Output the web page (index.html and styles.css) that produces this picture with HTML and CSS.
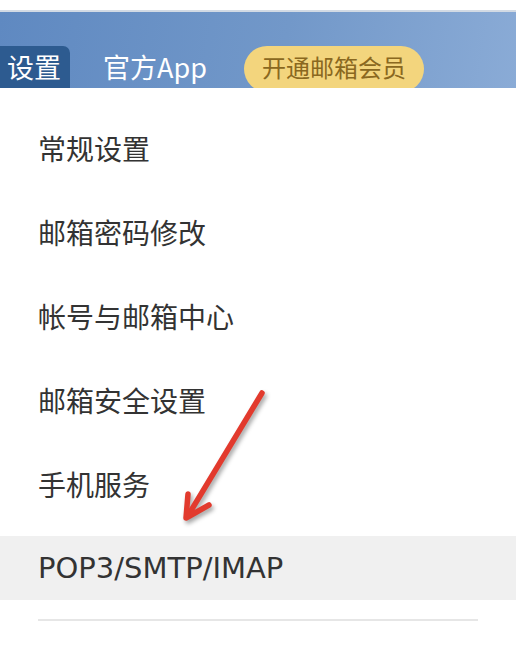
FILE: index.html
```html
<!DOCTYPE html>
<html lang="zh-CN">
<head>
<meta charset="utf-8">
<title>设置</title>
<link rel="stylesheet" href="styles.css">
</head>
<body>
<div class="page">
  <div class="topstrip"></div>
  <header class="header">
    <nav class="nav">
      <span class="tab active">设置</span>
      <span class="tab">官方App</span>
      <span class="vip">开通邮箱会员</span>
    </nav>
  </header>
  <ul class="menu">
    <li class="item">常规设置</li>
    <li class="item">邮箱密码修改</li>
    <li class="item">帐号与邮箱中心</li>
    <li class="item">邮箱安全设置</li>
    <li class="item">手机服务</li>
    <li class="item selected latin">POP3/SMTP/IMAP</li>
  </ul>
  <div class="divider"></div>
  <svg class="arrow" width="516" height="656" viewBox="0 0 516 656" aria-hidden="true">
    <g fill="none" stroke="#e23a2d" stroke-width="5.5" stroke-linecap="round" stroke-linejoin="round">
      <path d="M262 393 L189 514"/>
      <path d="M188 494 L186 518 L209 505"/>
    </g>
  </svg>
</div>
</body>
</html>
```
FILE: styles.css
```css
* { box-sizing: border-box; }
html, body { margin: 0; padding: 0; background: #fff; }
body {
  font-family: "DejaVu Sans", "Noto Sans CJK SC", sans-serif;
  color: #333;
}
.page {
  position: relative;
  width: 516px;
  height: 656px;
  overflow: hidden;
}
.topstrip {
  height: 12px;
  background: #fff;
  border-bottom: 2px solid #d2dae4;
}
.header {
  height: 76px;
  background: linear-gradient(100deg, #5f89c1 0%, #7298c9 55%, #8aabd6 100%);
  overflow: hidden;
  padding-top: 34px;
}
.nav {
  display: flex;
  align-items: flex-start;
  gap: 33px;
  font-family: "Noto Sans CJK SC", sans-serif;
}
.tab {
  height: 42px;
  line-height: 42px;
  font-size: 27px;
  color: #fff;
  white-space: nowrap;
}
.tab.active {
  background: #2d5b90;
  padding: 0 7px 0 7px;
  border-radius: 0 7px 0 0;
  width: 70px;
}
.vip {
  height: 46px;
  line-height: 42px;
  width: 180px;
  margin-left: 4px;
  text-align: center;
  font-size: 24px;
  color: #8a6820;
  background: #f3d57d;
  border-radius: 23px;
}
.menu {
  list-style: none;
  margin: 0;
  padding: 28px 0 0 0;
  display: flex;
  flex-direction: column;
  gap: 20px;
}
.item {
  height: 64px;
  line-height: 64px;
  padding-left: 38px;
  font-size: 28px;
  color: #333;
  font-family: "Noto Sans CJK SC", sans-serif;
}
.item.selected { background: #f0f0f0; }
.item.latin {
  font-family: "DejaVu Sans", sans-serif;
  font-size: 29px;
}
.divider {
  margin: 19px 38px 0 38px;
  height: 2px;
  background: #e6e6e6;
}
.arrow {
  position: absolute;
  left: 0;
  top: 0;
  pointer-events: none;
  filter: drop-shadow(2px 3px 2px rgba(0,0,0,0.35));
}
```
